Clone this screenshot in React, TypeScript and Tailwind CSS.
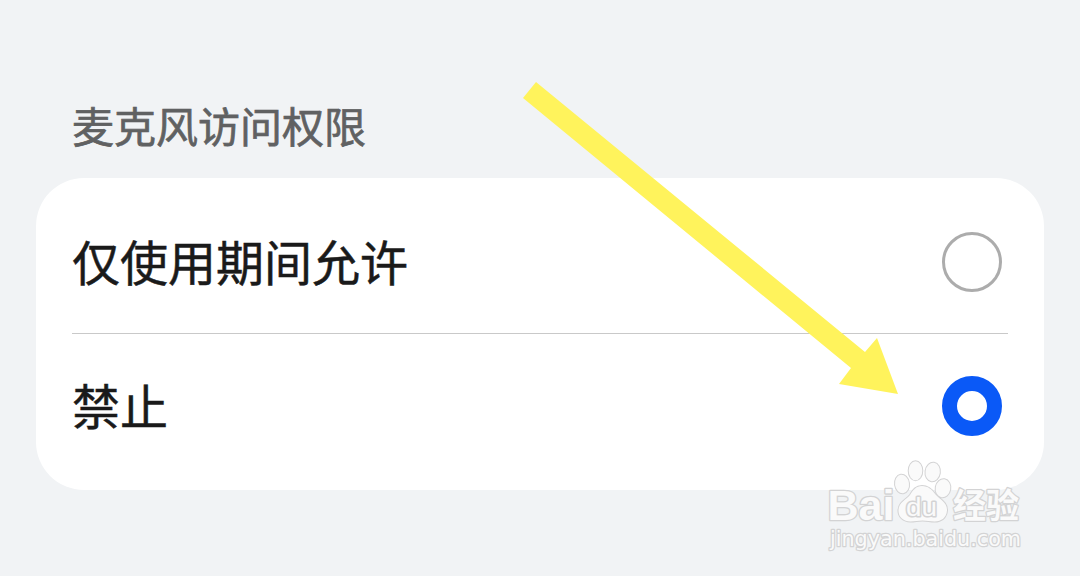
import React, { useState } from 'react';

interface PermissionOption {
  id: string;
  label: string;
}

const options: PermissionOption[] = [
  { id: 'while-using', label: '仅使用期间允许' },
  { id: 'deny', label: '禁止' }
];

const Radio: React.FC<{ checked: boolean }> = ({ checked }) => (
  <span
    className={`block size-[60px] shrink-0 rounded-full bg-white ${
      checked ? 'border-[15px] border-[#0a59f7]' : 'border-[3px] border-[#acacac]'
    }`}
  />
);

const Arrow: React.FC = () => (
  <svg className="pointer-events-none absolute top-0 left-0" width="1080" height="576" viewBox="0 0 1080 576">
    <polygon points="536,82 865,352 877,338 898,394 839,384 851,368 523,98" fill="#fff35c" />
  </svg>
);

const Watermark: React.FC = () => (
  <svg
    className="pointer-events-none absolute top-[450px] left-[820px]"
    width="215"
    height="110"
    viewBox="0 0 215 110"
    fill="#fafafa"
    stroke="#d3d3d4"
    strokeWidth="2.6"
    strokeLinejoin="round"
    paintOrder="stroke"
  >
    <text x="7.5" y="70" fontSize="42" fontWeight="700" textLength="67" lengthAdjust="spacingAndGlyphs" className="font-['Liberation_Sans',sans-serif]">
      Bai
    </text>
    {/* Paw */}
    <g strokeWidth="2">
      <ellipse cx="95.5" cy="20.7" rx="6.8" ry="9.5" />
      <ellipse cx="112.7" cy="22" rx="7.2" ry="9.3" transform="rotate(8 112.7 22)" />
      <ellipse cx="82" cy="34" rx="7" ry="9.3" transform="rotate(-8 82 34)" />
      <ellipse cx="123" cy="38.3" rx="7.3" ry="9.1" transform="rotate(10 123 38.3)" />
      <path d="M102 36c-6 0-9 4-12 9-4 5-11 7-11.500 15-.4 7 5 11.500 12 11.500 4 0 8-1 12-1s8 1 12 1c7 0 12-4 12.500-11 .4-8-7-11-11.500-16-3.500-5-7.500-8.500-13.500-8.500z" />
    </g>
    <text x="86" y="65.500" fontSize="26" strokeWidth="3" textLength="31" lengthAdjust="spacingAndGlyphs" className="font-['Liberation_Sans',sans-serif]">
      du
    </text>
    <text x="133" y="68" fontSize="34" fontWeight="700" textLength="66" lengthAdjust="spacingAndGlyphs" className="font-['Noto_Sans_CJK_SC',sans-serif]">
      经验
    </text>
    <text x="10" y="96" fontSize="21" textLength="191" lengthAdjust="spacingAndGlyphs" className="font-['DejaVu_Sans',sans-serif]">
      jingyan.baidu.com
    </text>
  </svg>
);

export default function App() {
  const [selected, setSelected] = useState('deny');

  return (
    <div className="relative h-[576px] w-[1080px] overflow-hidden bg-[#f1f3f5] px-9 pt-[95px] font-['Noto_Sans_CJK_SC',sans-serif]">
      <h2 className="h-[83px] pl-9 text-[42px] leading-[60px] font-normal text-[#606162] [-webkit-text-stroke:0.7px_#606162]">
        麦克风访问权限
      </h2>

      <div className="rounded-[48px] bg-white px-9 py-3">
        {options.map((option, index) => (
          <div
            key={option.id}
            role="radio"
            aria-checked={selected === option.id}
            className={`flex h-36 cursor-pointer items-center justify-between pr-1.5 ${
              index < options.length - 1 ? 'border-b border-[#c9c9c9]' : ''
            }`}
            onClick={() => setSelected(option.id)}
          >
            <span className="pb-1 text-[48px] leading-[72px] text-[#1a1a1a] [-webkit-text-stroke:0.5px_#1a1a1a]">
              {option.label}
            </span>
            <Radio checked={selected === option.id} />
          </div>
        ))}
      </div>

      <Arrow />
      <Watermark />
    </div>
  );
}
